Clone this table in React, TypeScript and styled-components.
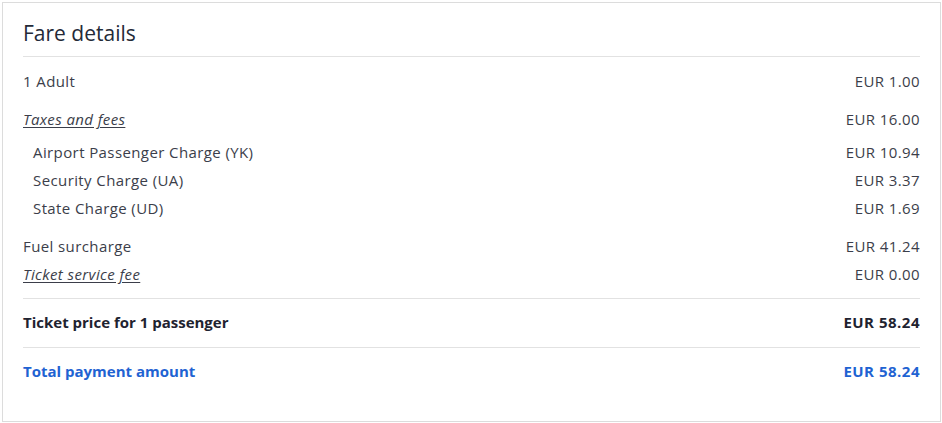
import React from 'react';
import styled, { createGlobalStyle } from 'styled-components';

const GlobalStyle = createGlobalStyle`
  html, body {
    margin: 0;
    padding: 0;
    background: #fff;
  }
  body {
    font-family: 'Open Sans', 'Liberation Sans', sans-serif;
  }
`;

const Page = styled.div`
  padding: 2px 1px 2px 2px;
`;

const Card = styled.section`
  border: 1px solid #dcdcdc;
  padding: 18px 20px 36px 20px;
  background: #fff;
`;

const Title = styled.h2`
  margin: 0;
  padding-bottom: 11px;
  font-size: 21px;
  line-height: 24px;
  font-weight: 400;
  color: #242a38;
  border-bottom: 1px solid #e2e2e2;
`;

const Body = styled.div`
  display: flex;
  flex-direction: column;
  gap: 10px;
  padding: 10px 0;
  border-bottom: 1px solid #e2e2e2;
`;

const Group = styled.div`
  display: flex;
  flex-direction: column;
`;

const SubGroup = styled.div`
  display: flex;
  flex-direction: column;
  margin-top: 5px;
  padding-left: 10px;
`;

const Row = styled.div<{ $tone?: 'normal' | 'strong' | 'accent' }>`
  display: flex;
  justify-content: space-between;
  align-items: center;
  height: 28px;
  font-size: 15px;
  letter-spacing: ${p => (p.$tone && p.$tone !== 'normal' ? '0' : '0.4px')};
  color: ${p => (p.$tone === 'accent' ? '#1f63d2' : p.$tone === 'strong' ? '#1f2330' : '#3b3e4a')};
  font-weight: ${p => (p.$tone && p.$tone !== 'normal' ? 700 : 400)};
`;

const Amount = styled.span<{ $wide?: boolean }>`
  letter-spacing: ${p => (p.$wide ? '0.5px' : 'inherit')};
`;

const LinkLabel = styled.span`
  font-style: italic;
  text-decoration: underline;
  text-underline-offset: 2px;
`;

const Summary = styled.div<{ $last?: boolean }>`
  padding: 9px 0 ${p => (p.$last ? '0' : '11px')};
  border-bottom: ${p => (p.$last ? 'none' : '1px solid #e2e2e2')};
`;

const taxes = [
  { label: 'Airport Passenger Charge (YK)', amount: 'EUR 10.94' },
  { label: 'Security Charge (UA)', amount: 'EUR 3.37' },
  { label: 'State Charge (UD)', amount: 'EUR 1.69' },
];

const App: React.FC = () => {
  return (
    <Page>
      <GlobalStyle />
      <Card>
        <Title>Fare details</Title>
        <Body>
          <Group>
            <Row>
              <span>1 Adult</span>
              <Amount>EUR 1.00</Amount>
            </Row>
          </Group>
          <Group>
            <Row>
              <LinkLabel>Taxes and fees</LinkLabel>
              <Amount>EUR 16.00</Amount>
            </Row>
            <SubGroup>
              {taxes.map(t => (
                <Row key={t.label}>
                  <span>{t.label}</span>
                  <Amount>{t.amount}</Amount>
                </Row>
              ))}
            </SubGroup>
          </Group>
          <Group>
            <Row>
              <span>Fuel surcharge</span>
              <Amount>EUR 41.24</Amount>
            </Row>
            <Row>
              <LinkLabel>Ticket service fee</LinkLabel>
              <Amount>EUR 0.00</Amount>
            </Row>
          </Group>
        </Body>
        <Summary>
          <Row $tone="strong">
            <span>Ticket price for 1 passenger</span>
            <Amount $wide>EUR 58.24</Amount>
          </Row>
        </Summary>
        <Summary $last>
          <Row $tone="accent">
            <span>Total payment amount</span>
            <Amount $wide>EUR 58.24</Amount>
          </Row>
        </Summary>
      </Card>
    </Page>
  );
};

export default App;
